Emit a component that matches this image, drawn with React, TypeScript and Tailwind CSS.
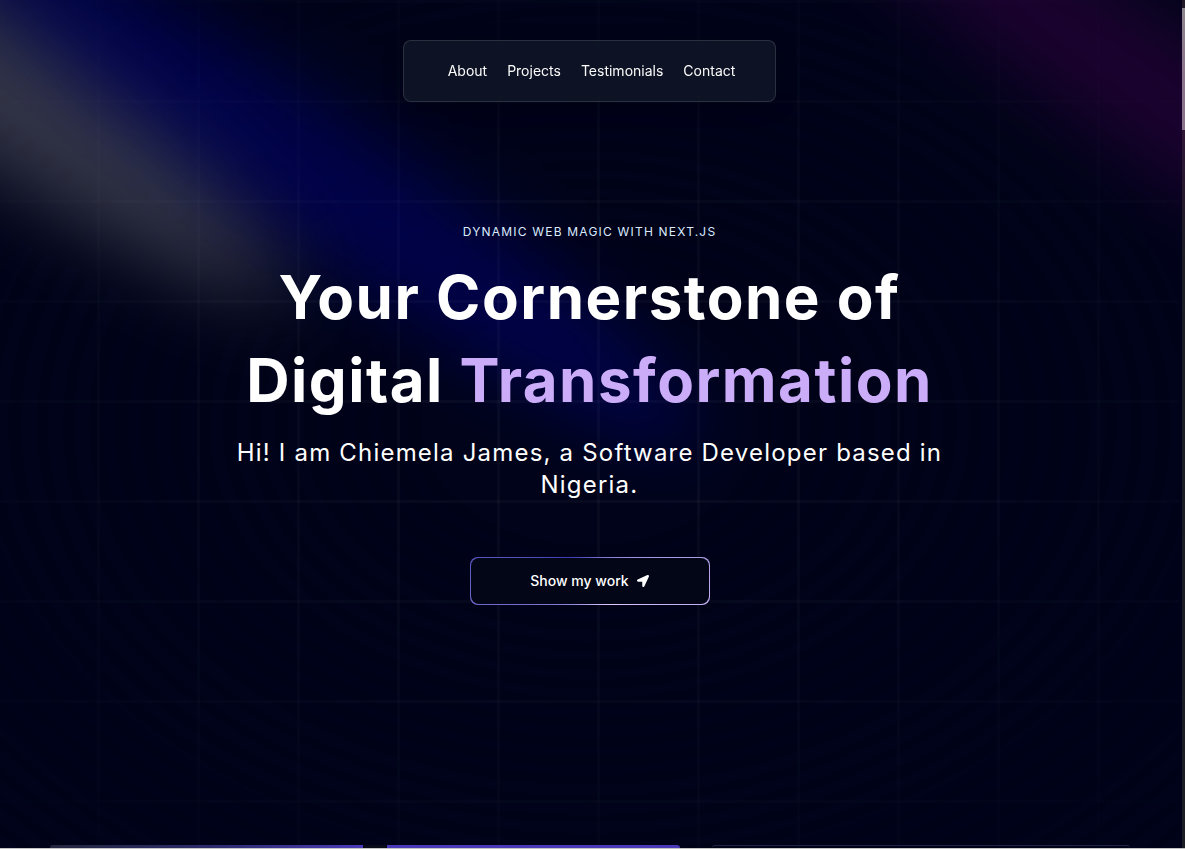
import { FaLocationArrow } from "react-icons/fa";

const navItems = ["About", "Projects", "Testimonials", "Contact"];

function Spotlights() {
  return (
    <svg
      className="pointer-events-none absolute left-0 top-0 z-[1]"
      width="1185"
      height="849"
      viewBox="0 0 1185 849"
      fill="none"
    >
      <defs>
        <filter
          id="blurA"
          x="-2000"
          y="-2000"
          width="5000"
          height="5000"
          filterUnits="userSpaceOnUse"
          colorInterpolationFilters="sRGB"
        >
          <feGaussianBlur stdDeviation="39.5" />
        </filter>
        <filter
          id="blurB"
          x="-2000"
          y="-2000"
          width="5000"
          height="5000"
          filterUnits="userSpaceOnUse"
          colorInterpolationFilters="sRGB"
        >
          <feGaussianBlur stdDeviation="36" />
        </filter>
      </defs>
      <ellipse
        cx="-128"
        cy="4"
        rx="503"
        ry="71.5"
        transform="rotate(34.68 -128 4)"
        fill="white"
        fillOpacity="0.2"
        filter="url(#blurA)"
      />
      <ellipse
        cx="1178"
        cy="108"
        rx="460"
        ry="65"
        transform="rotate(34.68 1178 108)"
        fill="purple"
        fillOpacity="0.21"
        filter="url(#blurB)"
      />
      <ellipse
        cx="320"
        cy="180"
        rx="460"
        ry="65"
        transform="rotate(34.68 320 180)"
        fill="blue"
        fillOpacity="0.21"
        filter="url(#blurB)"
      />
    </svg>
  );
}

export default function App() {
  return (
    <div className="relative h-[849px] w-full overflow-hidden bg-[#000319] font-['Inter','Noto_Sans',sans-serif] text-white">
      {/* grid background with radial fade */}
      <div className="absolute left-0 top-0 h-[849px] w-[1179px] bg-[#000319] bg-[linear-gradient(to_right,transparent_97px,rgba(255,255,255,0.03)_97px),linear-gradient(to_bottom,rgba(255,255,255,0.03)_3px,transparent_3px)] bg-[size:100px_100px]">
        <div className="absolute inset-0 bg-[#000319] [mask-image:radial-gradient(ellipse_at_center,transparent_20%,black)]" />
      </div>

      <Spotlights />

      <div className="relative z-10 flex w-[1179px] flex-col">
        {/* hero */}
        <section className="flex h-[845px] flex-col items-center pt-10">
          <nav className="flex items-center gap-4 rounded-lg border border-[rgba(255,255,255,0.125)] bg-[rgba(17,25,40,0.75)] px-10 py-5 shadow-[0_4px_20px_rgba(0,0,0,0.25)] backdrop-blur-md">
            {navItems.map((item) => (
              <a
                key={item}
                className="ml-1 cursor-pointer text-sm leading-5 text-[#fafafa]"
              >
                {item}
              </a>
            ))}
          </nav>

          <div className="mt-[122px] flex max-w-[711px] flex-col items-center">
            <p className="max-w-80 text-center text-xs uppercase leading-4 tracking-widest text-[#dbeafe]">
              Dynamic Web Magic with Next.js
            </p>

            <h1 className="my-4 text-center text-[60px] font-bold leading-[82.5px] tracking-wide">
              <span className="text-white">Your</span>{" "}
              <span className="text-white">Cornerstone</span>{" "}
              <span className="text-white">of</span>{" "}
              <span className="text-white">Digital</span>{" "}
              <span className="text-[#cbacf9]">Transformation</span>
            </h1>

            <p className="mb-4 text-center text-2xl leading-8 tracking-wider text-white">
              Hi! I am Chiemela James, a Software Developer based in Nigeria.
            </p>

            <button className="relative mt-10 inline-flex h-12 w-60 overflow-hidden rounded-lg bg-[conic-gradient(from_135deg_at_50%_50%,#E2CBFF_0%,#393BB2_50%,#E2CBFF_100%)] p-px">
              <span className="inline-flex h-full w-full cursor-pointer items-center justify-center gap-2 rounded-lg bg-[#020617] px-7 text-sm font-medium text-white">
                Show my work
                <FaLocationArrow className="h-3 w-3" />
              </span>
            </button>
          </div>
        </section>

        {/* top edge of the next section's cards */}
        <div className="flex h-[3px] items-start">
          <div className="ml-[50px] h-[3px] w-[313px] rounded-tl-lg bg-gradient-to-r from-[#24263f] via-[#2c2a6a] to-[#4a3ab8]" />
          <div className="h-[3px] w-[24px] rounded-t-full bg-[#0a0b18]" />
          <div className="h-[3px] w-[293px] rounded-tr-lg bg-[#4a3ab8]" />
          <div className="ml-[32px] h-[3px] w-[418px] rounded-t-lg border-t border-[#1f2446]" />
        </div>
        <div className="h-px w-full bg-[#c4c4c4]" />
      </div>

      {/* scrollbar */}
      <div className="absolute right-0 top-0 h-[848px] w-[3px] bg-[#1c1c24]">
        <div className="mt-[8px] h-[122px] w-[3px] bg-[#8e8e8e]" />
      </div>
      <div className="absolute bottom-0 right-0 h-px w-[7px] bg-[#c4c4c4]" />
    </div>
  );
}
